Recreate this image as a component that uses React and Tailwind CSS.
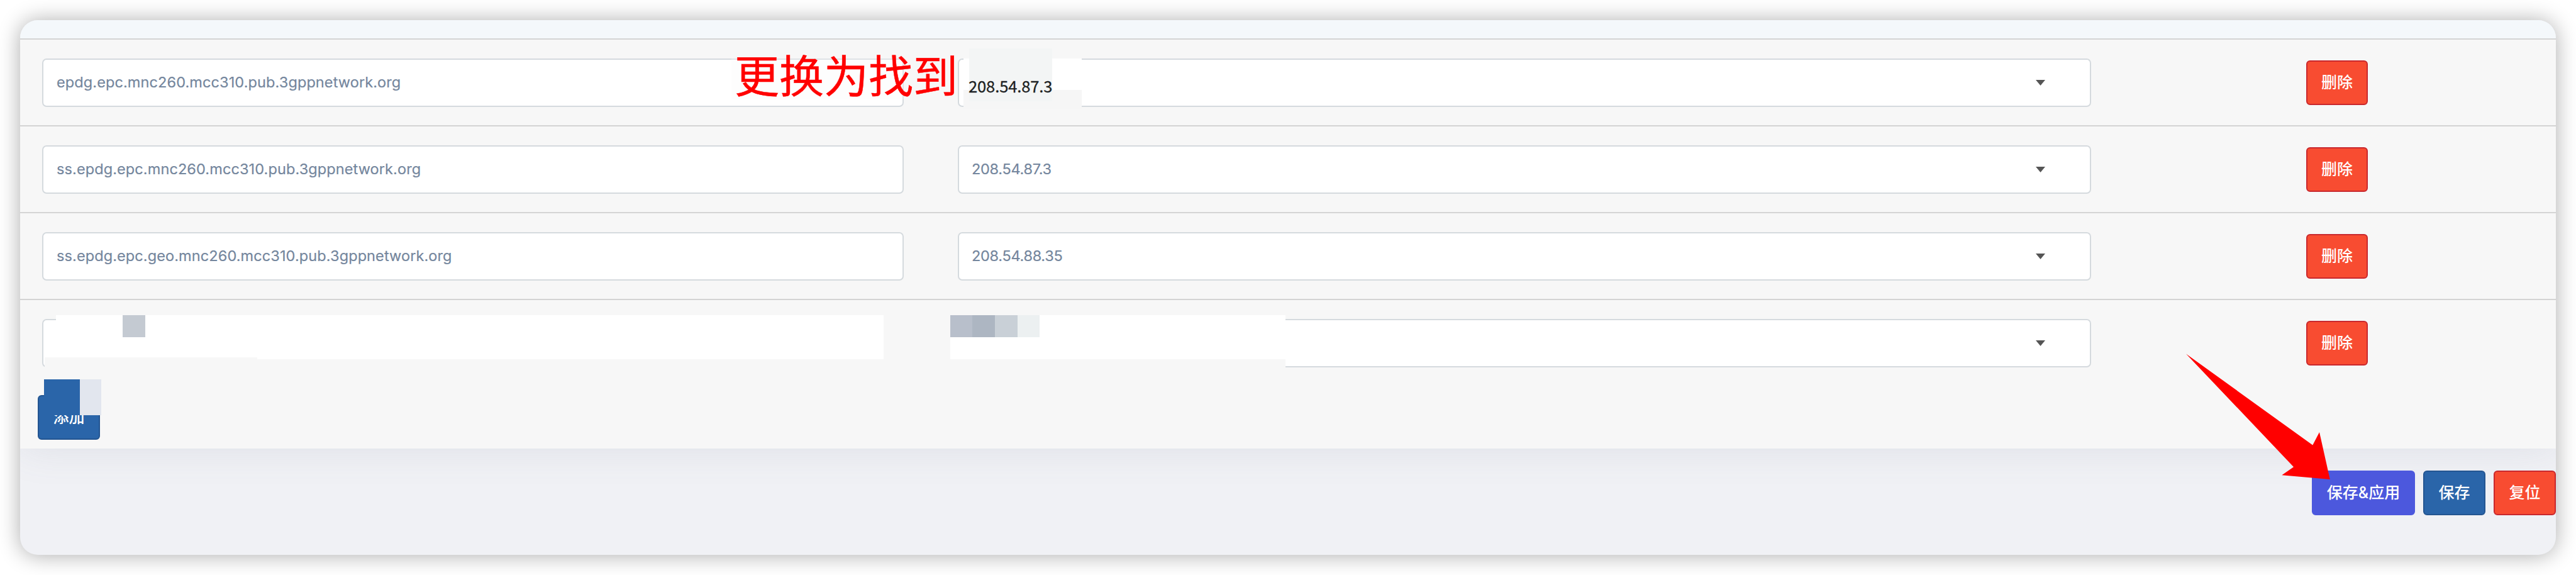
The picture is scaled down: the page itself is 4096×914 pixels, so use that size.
import React from 'react';

const rows = [
    { domain: 'epdg.epc.mnc260.mcc310.pub.3gppnetwork.org', ip: '' },
    { domain: 'ss.epdg.epc.mnc260.mcc310.pub.3gppnetwork.org', ip: '208.54.87.3' },
    { domain: 'ss.epdg.epc.geo.mnc260.mcc310.pub.3gppnetwork.org', ip: '208.54.88.35' },
    { domain: '', ip: '' },
];

const buttonBase = 'h-[71px] rounded-[6px] border-2 text-[25px] leading-none font-medium text-white whitespace-nowrap flex items-center justify-center';
const fieldBase = 'mt-[30px] flex h-[77px] items-center rounded-[7px] border-2 border-[#d5dade] bg-white text-[23.5px] text-[#74869d]';

function HostRow({ row }) {
    return (
        <div className="flex h-[138px] border-t-2 border-[#d4d4d4] pl-[35px]">
            <div className={fieldBase + ' w-[1370px] pb-[1px] pl-[21px]'}>
                <span className="tracking-[0.1px] [-webkit-text-stroke:0.2px]">{row.domain}</span>
            </div>
            <div className={fieldBase + ' ml-[86px] w-[1802px] justify-between pb-[1px] pl-[20px] pr-[71px]'}>
                <span className="tracking-[-0.3px] [-webkit-text-stroke:0.2px]">{row.ip}</span>
                <svg width="15" height="9" viewBox="0 0 15 9"><path d="M0 0H15L7.5 9Z" fill="#555" /></svg>
            </div>
            <button className={buttonBase + ' mt-[33px] ml-[342px] w-[98px] border-[#c9282d] bg-[#f84c31]'}>删除</button>
        </div>
    );
}

// Blurred-out values of the last row and the patches over the add button
function Mosaic() {
    return (
        <>
            <div className="absolute left-[89px] top-[491px] h-[97px] w-[1955px] bg-[#f7f7f7]" />
            <div className="absolute left-[89px] top-[501px] h-[70px] w-[1316px] bg-white" />
            <div className="absolute left-[71px] top-[568px] h-[20px] w-[338px] bg-[#f7f7f7]" />
            <div className="absolute left-[195px] top-[501px] h-[35px] w-[36px] bg-[#c4cad2]" />
            <div className="absolute left-[1511px] top-[501px] h-[70px] w-[533px] bg-white">
                <div className="flex h-[35px]">
                    <div className="w-[35px] bg-[#b8bfcb]" />
                    <div className="w-[36px] bg-[#adb6c2]" />
                    <div className="w-[36px] bg-[#c9d0d7]" />
                    <div className="w-[35px] bg-[#ecf0f1]" />
                </div>
            </div>
            <div className="absolute left-[70px] top-[603px] flex h-[57px]">
                <div className="w-[57px] bg-[#2a65a9]" />
                <div className="w-[34px] bg-[#e2e6ee]" />
            </div>
        </>
    );
}

function Annotations() {
    return (
        <>
            <div className="absolute left-[1532px] top-[93px] h-[50px] w-[188px] bg-white" />
            <div className="absolute left-[1532px] top-[143px] h-[30px] w-[188px] bg-[#f6f6f6]" />
            <div className="absolute left-[1541px] top-[77px] h-[84px] w-[132px] bg-[#f3f5f5]" />
            <div className="absolute left-[1163px] top-[80px] h-[78px] w-[358px] bg-[#f7f7f7]/30" />
            <span className="absolute left-[1540px] top-[123px] font-['Noto_Sans_CJK_SC',sans-serif] text-[25.5px] leading-none tracking-[-0.1px] text-[#1c1f22] [-webkit-text-stroke:0.3px]">208.54.87.3</span>
            <span className="absolute left-[1168px] top-[81px] font-['Noto_Sans_CJK_SC',sans-serif] text-[71px] leading-none text-[#f00] [-webkit-text-stroke:0.5px]">更换为找到</span>
            <svg className="absolute left-[3476px] top-[562px]" width="230" height="201" viewBox="0 0 230 201">
                <path d="M0 0.5L201.3 145.6L212 125L228.8 200L152.3 193.3L171 180.2Z" fill="#f00" />
            </svg>
        </>
    );
}

export default function App() {
    return (
        <div className="relative h-[914px] w-[4096px] overflow-hidden bg-white p-8 font-['Inter','Noto_Sans_CJK_SC',sans-serif]">
            <div className="flex h-[850px] w-[4032px] flex-col overflow-hidden rounded-[28px] bg-[#f0f1f5] shadow-[0_1px_35px_rgba(0,0,0,0.33)]">
                <div className="relative z-10 h-[29px] bg-[#f4f8fb]" />
                <div className="h-[652px] bg-[#f7f7f7] shadow-[0_0_60px_rgba(100,110,130,0.12)]">
                    {rows.map((row, i) => (
                        <HostRow key={i} row={row} />
                    ))}
                    <button className={buttonBase + ' mt-[15px] ml-[28px] w-[99px] border-[#235591] bg-[#2a65a9]'}>添加</button>
                </div>
                <div className="mt-[35px] flex justify-end gap-[13px]">
                    <button className={buttonBase + ' w-[164px] border-[#4c58dd] bg-[#4c58dd]'}>保存&amp;应用</button>
                    <button className={buttonBase + ' w-[99px] border-[#235591] bg-[#2a65a9]'}>保存</button>
                    <button className={buttonBase + ' w-[99px] border-[#c9282d] bg-[#f84c31]'}>复位</button>
                </div>
            </div>
            <Mosaic />
            <Annotations />
        </div>
    );
}
